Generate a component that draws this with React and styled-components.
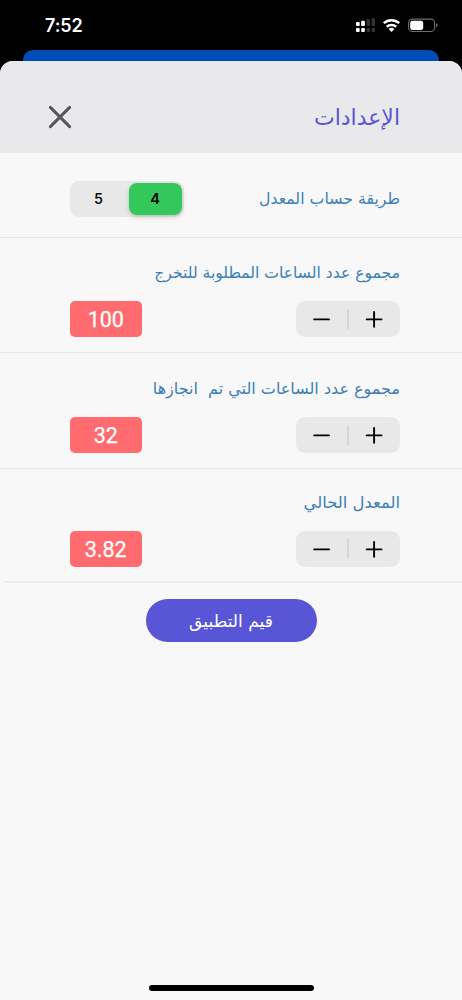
import { useState } from 'react';
import styled, { createGlobalStyle } from 'styled-components';

const App = () => {
  const [scale, setScale] = useState(4);
  const [required, setRequired] = useState(100);
  const [completed, setCompleted] = useState(32);
  const [average, setAverage] = useState(3.82);

  return (
    <Phone>
      <GlobalStyle />
      <StatusBar>
        <time>7:52</time>
        <StatusIcons />
      </StatusBar>
      <BackSheet />
      <Sheet>
        <Header>
          <Title>الإعدادات</Title>
          <CloseButton aria-label='إغلاق'>
            <svg width='24' height='24' viewBox='0 0 24 24'>
              <path d='M2.4 2.4 21.6 21.6M21.6 2.4 2.4 21.6' />
            </svg>
          </CloseButton>
        </Header>
        <ScaleRow>
          <Label $size={15.75}>طريقة حساب المعدل</Label>
          <Segmented>
            {[4, 5].map((n) => (
              <Segment key={n} $active={scale === n} onClick={() => setScale(n)}>
                {n}
              </Segment>
            ))}
          </Segmented>
        </ScaleRow>
        <SettingRow
          height={115}
          top={23}
          size={15.6}
          label='مجموع عدد الساعات المطلوبة للتخرج'
          value={required}
          onStep={(d) => setRequired(required + d)}
        />
        <SettingRow
          height={116}
          top={24}
          size={16}
          label='مجموع عدد الساعات التي تم  انجازها'
          value={completed}
          onStep={(d) => setCompleted(completed + d)}
        />
        <SettingRow
          height={114}
          top={22}
          size={16.4}
          last
          label='المعدل الحالي'
          value={average.toFixed(2)}
          onStep={(d) => setAverage(average + d / 100)}
        />
        <RateButton>قيم التطبيق</RateButton>
        <HomeIndicator />
      </Sheet>
    </Phone>
  );
};

const SettingRow = ({ height, top, size, last, label, value, onStep }) => (
  <Row $height={height} $top={top} $last={last}>
    <Label $size={size}>{label}</Label>
    <Controls>
      <Stepper>
        <button aria-label='+' onClick={() => onStep(1)}>
          <svg width='18' height='18' viewBox='0 0 18 18'>
            <path d='M1.7 9.4h14.8M9.1 2v14.8' />
          </svg>
        </button>
        <i />
        <button aria-label='-' onClick={() => onStep(-1)}>
          <svg width='18' height='18' viewBox='0 0 18 18'>
            <path d='M2.2 9.4h14.8' />
          </svg>
        </button>
      </Stepper>
      <Value>{value}</Value>
    </Controls>
  </Row>
);

const StatusIcons = () => (
  <svg width='84' height='18' viewBox='0 0 84 18'>
    {/* signal, two lines */}
    <g fill='#fff'>
      <rect x='1' y='8' width='3.7' height='4' rx='1' />
      <rect x='6.2' y='6.7' width='3.7' height='5.3' rx='1' />
      <rect x='1' y='14' width='3.7' height='4' rx='1' />
      <rect x='6.2' y='14' width='3.7' height='4' rx='1' />
    </g>
    <g fill='#333'>
      <rect x='11.5' y='5.3' width='3.6' height='6.7' rx='1' />
      <rect x='16.6' y='4' width='3.4' height='8' rx='1' />
      <rect x='11.5' y='14' width='3.6' height='4' rx='1' />
      <rect x='16.6' y='14' width='3.4' height='4' rx='1' />
    </g>
    {/* wifi */}
    <g fill='none' stroke='#fff' strokeWidth='2.5'>
      <path d='M28.8 9.2a11.3 11.3 0 0 1 15.4 0' />
      <path d='M31.8 12.7a7 7 0 0 1 9.4 0' />
    </g>
    <path d='M33.7 15a4.4 4.4 0 0 1 5.6 0L36.5 18Z' fill='#fff' />
    {/* battery */}
    <rect x='53.6' y='5.1' width='26' height='12.4' rx='3.8' fill='none' stroke='#6e6e6e' strokeWidth='1.1' />
    <rect x='55.2' y='6.7' width='13' height='9.3' rx='2.2' fill='#fff' />
    <path d='M81 9.3c2.1.6 2.1 3.5 0 4.1Z' fill='#6e6e6e' />
  </svg>
);

const GlobalStyle = createGlobalStyle`
  body {
    margin: 0;
    background: #000;
  }
  * {
    box-sizing: border-box;
  }
  button {
    padding: 0;
    border: 0;
    background: none;
    font: inherit;
    color: inherit;
  }
  svg {
    display: block;
  }
`;

const Phone = styled.div`
  display: flex;
  flex-direction: column;
  width: 462px;
  height: 1000px;
  overflow: hidden;
  background: #000;
  font-family: 'DejaVu Sans', sans-serif;
`;

const StatusBar = styled.div`
  display: flex;
  justify-content: space-between;
  height: 49.5px;
  padding: 14px 23px 0 45px;
  time {
    margin-top: 1px;
    font: 600 18px/22px Inter, sans-serif;
    letter-spacing: -0.1px;
    color: #fff;
  }
`;

const BackSheet = styled.div`
  height: 11px;
  margin: 0 23px;
  border-radius: 10px 10px 0 0;
  background: #004db8;
`;

const Sheet = styled.main`
  flex: 1;
  display: flex;
  flex-direction: column;
  direction: rtl;
  border-radius: 13px 13px 0 0;
  overflow: hidden;
  background: #f8f8f8;
`;

const Header = styled.header`
  display: flex;
  align-items: center;
  justify-content: space-between;
  height: 92.5px;
  padding: 20px 62px 0 48px;
  background: #e9e9eb;
`;

const Title = styled.h1`
  margin: 3px 0 0;
  font-size: 22px;
  font-weight: 400;
  line-height: 30px;
  color: #5856d6;
`;

const CloseButton = styled.button`
  path {
    stroke: #58585a;
    stroke-width: 3.1;
    stroke-linecap: round;
  }
`;

const ScaleRow = styled.section`
  display: flex;
  justify-content: space-between;
  height: 85px;
  padding: 28px 62px 0 70px;
  border-bottom: 1px solid #e6e6e7;
  > span {
    margin-top: 6px;
  }
`;

const Label = styled.span`
  font-size: ${({ $size }) => $size}px;
  line-height: 24px;
  white-space: pre;
  color: #3d7fb5;
`;

const Segmented = styled.div`
  display: flex;
  justify-content: space-between;
  width: 113.5px;
  height: 36px;
  padding: 2px;
  border-radius: 9px;
  background: #e8e8e8;
`;

const Segment = styled.button`
  width: 53px;
  height: 32px;
  border-radius: 8px;
  font: ${({ $active }) => ($active ? 600 : 500)} 14.5px/32px Inter, sans-serif;
  color: #000;
  background: ${({ $active }) => ($active ? '#34c759' : 'none')};
  box-shadow: ${({ $active }) => ($active ? '0 2px 5px rgba(0, 0, 0, 0.18)' : 'none')};
`;

const Row = styled.section`
  display: flex;
  flex-direction: column;
  justify-content: space-between;
  height: ${({ $height }) => $height}px;
  margin-left: ${({ $last }) => ($last ? 5 : 0)}px;
  padding: ${({ $top }) => $top}px 62px ${({ $last }) => ($last ? 14 : 15)}px
    ${({ $last }) => ($last ? 65 : 70)}px;
  border-bottom: ${({ $last }) => ($last ? '2px solid #ededee' : '1px solid #e6e6e7')};
`;

const Controls = styled.div`
  display: flex;
  justify-content: space-between;
`;

const Stepper = styled.div`
  display: flex;
  align-items: center;
  width: 104.5px;
  height: 36px;
  border-radius: 9px;
  background: #e8e8e8;
  button {
    flex: 1;
    display: flex;
    justify-content: center;
  }
  path {
    stroke: #000;
    stroke-width: 1.9;
    stroke-linecap: round;
  }
  i {
    width: 1.5px;
    height: 20px;
    background: #d6d6d7;
  }
`;

const Value = styled.output`
  width: 71.5px;
  height: 36px;
  border-radius: 5px;
  font: 400 21.5px/37px Roboto, sans-serif;
  -webkit-text-stroke: 0.25px #fff;
  text-align: center;
  color: #fff;
  background: #ff6b6f;
`;

const RateButton = styled.button`
  align-self: center;
  width: 171px;
  height: 43px;
  margin-top: 16px;
  border-radius: 22px;
  font-size: 17.1px;
  color: #fff;
  background: #5856d6;
`;

const HomeIndicator = styled.div`
  align-self: center;
  width: 165px;
  height: 6px;
  margin-top: auto;
  margin-bottom: 9px;
  border-radius: 3px;
  background: #000;
`;

export default App;
